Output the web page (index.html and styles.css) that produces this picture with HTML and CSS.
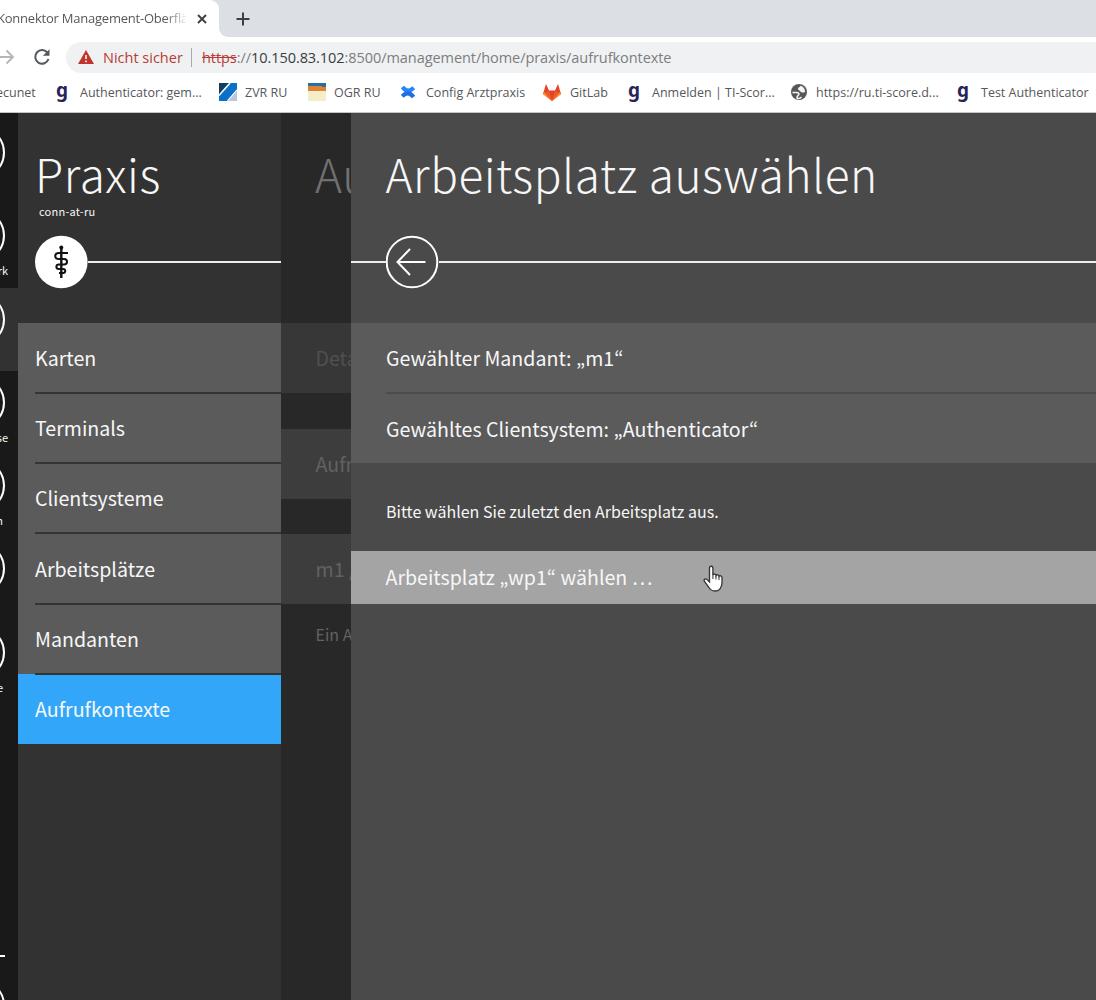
FILE: index.html
```html
<!DOCTYPE html>
<html lang="de">
<head>
<meta charset="utf-8">
<title>Konnektor Management-Oberfläche</title>
<link rel="stylesheet" href="styles.css">
</head>
<body>
<header class="browser">
  <div class="tabstrip">
    <div class="tab"><span class="tab-title">Konnektor Management-Oberfläche</span>
      <svg class="tab-close" width="10" height="10" viewBox="0 0 10 10"><path d="M1 1l8 8M9 1l-8 8" stroke="#3c4043" stroke-width="1.9"/></svg>
    </div>
    <div class="tab-rest"><svg width="14" height="14" viewBox="0 0 14 14"><path d="M7 .5v13M.5 7h13" stroke="#3c4043" stroke-width="2"/></svg></div>
  </div>
  <div class="toolbar">
    <svg class="forward" width="16" height="16" viewBox="0 0 16 16"><path d="M0 8h13M6.500 1.500L13 8l-6.500 6.500" fill="none" stroke="#b4b6b8" stroke-width="1.9"/></svg>
    <svg class="reload" width="18" height="18" viewBox="0 0 18 18"><path d="M14.600 5A6.800 6.800 0 1 0 15.500 11" fill="none" stroke="#55585c" stroke-width="2"/><path d="M16.500 1.200v6.600h-6.600z" fill="#55585c"/></svg>
    <div class="address">
      <svg class="warn" width="16" height="14" viewBox="0 0 16 14"><path d="M8 0l8 14H0z" fill="#c0352b"/><path d="M8 5v4M8 10.500v1.700" stroke="#fff" stroke-width="1.500"/></svg>
      <span class="insecure">Nicht sicher</span>
      <span class="divider"></span>
      <span class="url"><s>https</s>://<b>10.150.83.102</b>:8500/management/home/praxis/aufrufkontexte</span>
    </div>
  </div>
  <nav class="bookmarks">
    <span class="bm bm-secunet">secunet</span>
    <span class="bm bm-auth"><i class="g">g</i><span>Authenticator: gem...</span></span>
    <span class="bm bm-zvr"><svg width="18" height="18" viewBox="0 0 18 18"><path d="M0 0h18v18H0z" fill="#0b70c8"/><path d="M0 0h10L0 11z" fill="#173c5c"/><path d="M11 0L0 12.500" stroke="#fff" stroke-width="1.500"/><path d="M18 8v10H9z" fill="#b8c8dc"/><path d="M18 7L8.500 18" stroke="#fff" stroke-width="1.200"/></svg><span>ZVR RU</span></span>
    <span class="bm bm-ogr"><svg width="18" height="18" viewBox="0 0 18 18"><path d="M0 0h18v18H0z" fill="#f3edc9"/><path d="M0 0h18v8H0z" fill="#df8136"/><path d="M0 0h18v4h-4V3H0z" fill="#286f9f"/></svg><span>OGR RU</span></span>
    <span class="bm bm-config"><svg width="14" height="14" viewBox="0 0 14 14"><path d="M1.500 2C5 7 9 6.500 12.800 2.800" fill="none" stroke="#2684ff" stroke-width="4.200"/><path d="M12.500 12C9 7 5 7.500 1.200 11.200" fill="none" stroke="#1f70e0" stroke-width="4.200"/></svg><span>Config Arztpraxis</span></span>
    <span class="bm bm-gitlab"><svg width="18" height="17" viewBox="0 0 18 17"><path d="M9 17L0 10 3 0l3 6.500h6L15 0l3 10z" fill="#e24329"/><path d="M9 17L2 9l4-2.500zM9 17l7-8-4-2.500z" fill="#ee5a28"/><path d="M9 17L0 10l.8-2.500zM9 17l9-7-.8-2.500z" fill="#fc8a26"/></svg><span>GitLab</span></span>
    <span class="bm bm-anm"><i class="g">g</i><span>Anmelden | TI-Scor...</span></span>
    <span class="bm bm-ru"><svg width="16" height="16" viewBox="0 0 16 16"><circle cx="8" cy="8" r="8" fill="#585858"/><path d="M1.500 8.500h4c2.500 0 3 1.500 2 2.500-.8.800-1.500.8-1.500 3.200 2 .6 3.500 0 4.500-1.200" fill="none" stroke="#f5f5f5" stroke-width="1.500"/><path d="M9.500 1.800C9 3.500 7 3 7 5c0 1.500 1.800 1 2.500 2.500.8 1.500 3 1.200 4.500.5.200-2.500-1.500-5.500-4.500-6.200z" fill="#f5f5f5"/></svg><span>https://ru.ti-score.d...</span></span>
    <span class="bm bm-test"><i class="g">g</i><span>Test Authenticator</span></span>
  </nav>
</header>
<main class="app">
  <nav class="rail">
    <div class="rail-item"><span class="ring"></span></div>
    <div class="rail-item"><span class="ring"></span><span class="rail-label">Netzwerk</span></div>
    <div class="rail-item active"><span class="ring"></span></div>
    <div class="rail-item"><span class="ring"></span><span class="rail-label">Diagnose</span></div>
    <div class="rail-item"><span class="ring"></span><span class="rail-label n">System</span></div>
    <div class="rail-item"><span class="ring"></span></div>
    <div class="rail-item"><span class="ring"></span><span class="rail-label e">Hilfe</span></div>
    <div class="rail-foot"><span class="rail-line"></span><span class="ring"></span></div>
  </nav>
  <section class="panel praxis">
    <div class="head">
      <h1>Praxis</h1>
      <p class="host">conn-at-ru</p>
      <div class="rule">
        <svg width="53" height="54" viewBox="0 0 53 54"><circle cx="26.300" cy="27" r="26.300" fill="#fff"/><path d="M26.300 12v31" stroke="#111" stroke-width="2.400"/><circle cx="26.300" cy="12.500" r="2" fill="#111"/><path d="M33 18H24c-5 0-5 6 0 6h5c4 0 4 5.500 0 5.500h-5c-3.500 0-3.500 4.500 0 4.500h4c3 0 3 4 0 4h-4" fill="none" stroke="#111" stroke-width="2"/></svg>
        <span class="line"></span>
      </div>
    </div>
    <ul class="menu">
      <li><span>Karten</span></li>
      <li><span>Terminals</span></li>
      <li><span>Clientsysteme</span></li>
      <li><span>Arbeitsplätze</span></li>
      <li><span>Mandanten</span></li>
      <li class="selected"><span>Aufrufkontexte</span></li>
    </ul>
  </section>
  <section class="panel context">
    <div class="head"><h1>Aufrufkontexte</h1></div>
    <div class="dim first">Details</div>
    <div class="dim second">Aufrufkontext</div>
    <div class="dim third">m1 / Authenticator</div>
    <p class="dim-note">Ein Aufrufkontext</p>
  </section>
  <section class="panel workplace">
    <div class="head">
      <h1>Arbeitsplatz auswählen</h1>
      <div class="rule">
        <span class="line lead"></span>
        <svg width="53" height="54" viewBox="0 0 53 54"><circle cx="26" cy="27" r="25.300" fill="none" stroke="#fff" stroke-width="2"/><path d="M39.500 27H11.500M24 14L11.500 27 24 40" fill="none" stroke="#fff" stroke-width="2"/></svg>
        <span class="line"></span>
      </div>
    </div>
    <div class="facts">
      <div class="fact"><span>Gewählter Mandant: „m1“</span></div>
      <div class="fact"><span>Gewähltes Clientsystem: „Authenticator“</span></div>
    </div>
    <p class="hint">Bitte wählen Sie zuletzt den Arbeitsplatz aus.</p>
    <div class="choice">Arbeitsplatz „wp1“ wählen …
      <svg class="hand" width="22" height="27" viewBox="0 0 22 27"><path d="M6.500 17V3.200c0-2.600 3.400-2.600 3.400 0V10c.6-1.500 3-1.200 3.100.5.700-1.300 2.900-.8 3 .8.900-1 3-.5 3 1.500V18c0 2.500-1 3.500-1.500 5-1 2-2.500 3-5.500 3s-4.500-1-6-3.500L1.500 16.500c-1.200-2.200 1-3.600 2.700-1.900z" fill="#fff" stroke="#333" stroke-width="1.300"/><path d="M9.900 9.500v4.500M13 10.500v4M16 11.500v3.500" stroke="#333" stroke-width="1"/></svg>
    </div>
  </section>
</main>
</body>
</html>
```
FILE: styles.css
```css
* { box-sizing: border-box; }
body { margin: 0; width: 1096px; height: 1000px; overflow: hidden; font-family: "Noto Sans CJK KR", "Noto Sans CJK SC", sans-serif; color: #f7f7f7; }
h1, p, ul { margin: 0; padding: 0; list-style: none; font-weight: 400; }
svg { display: block; flex: none; }

.browser { height: 113px; background: #fff; border-bottom: 1px solid #c4c6c4; font-family: "Open Sans", sans-serif; color: #55585c; white-space: nowrap; }
.tabstrip { display: flex; height: 37px; background: linear-gradient(#fff, #fff) 215px 27px / 20px 10px no-repeat, #dcdfe4; }
.tab { display: flex; align-items: center; width: 219px; background: #fff; border-top-right-radius: 9px; }
.tab-title { width: 189px; margin: -2px 0 0 -3px; overflow: hidden; font-size: 13px; letter-spacing: -.22px; mask-image: linear-gradient(90deg, #000 168px, transparent 192px); }
.tab-close { margin-left: 11px; }
.tab-rest { flex: 1; display: flex; align-items: center; padding-left: 17px; background: #dcdfe4; border-bottom-left-radius: 9px; }
.toolbar { display: flex; align-items: center; height: 40px; }
.reload { margin-left: 17px; }
.address { display: flex; align-items: center; flex: 1; height: 31px; margin-left: 15px; padding-left: 12px; background: #f0f1f2; border-radius: 16px 0 0 16px; font-size: 15px; }
.insecure { width: 80px; margin-left: 9px; color: #b83c35; font-size: 14.500px; }
.divider { width: 1px; height: 19px; margin: 0 10px 0 8px; background: #a8abad; }
.url { color: #7b7e80; font-size: 14.500px; letter-spacing: -.06px; }
.url b { font-weight: 400; color: #393c40; }
.url s { color: #b83c35; }
.bookmarks { display: flex; align-items: center; height: 30px; font-size: 12.500px; }
.bm { display: flex; align-items: center; flex: none; }
.bm-secunet { width: 60px; margin-left: -10px; }
.g { width: 13px; margin-right: 11px; font: 700 19px/18px "Noto Sans", sans-serif; color: #29235b; transform: translateY(-2px); }
.bm-auth { width: 163px; margin-left: 6px; }
.bm-zvr { width: 89px; gap: 8px; }
.bm-ogr { width: 93px; gap: 8px; }
.bm-config { width: 142px; gap: 11px; }
.bm-gitlab { width: 85px; gap: 9px; }
.bm-anm { width: 163px; }
.bm-ru { width: 166px; gap: 9px; }

.app { display: flex; height: 887px; }
.rail { display: flex; flex-direction: column; width: 18px; padding-top: 8px; background: #191919; overflow: hidden; }
.rail-item { height: 83.300px; padding-top: 5px; }
.rail-item.active { background: #323232; }
.ring { display: block; width: 53px; height: 53px; margin-left: -48px; border: 2px solid #fff; border-radius: 50%; }
.rail-label { display: block; width: 70px; margin: -1px 0 0 -62px; text-align: right; font-size: 11px; line-height: 18px; }
.rail-label.n, .rail-label.e { margin-left: -67px; }
.rail-foot { margin-top: auto; height: 46px; }
.rail-line { display: block; width: 5px; height: 2px; margin: 1px 0 22px; background: #fff; }

.panel { height: 887px; overflow: hidden; white-space: nowrap; }
.head { height: 210px; }
h1 { height: 88px; padding-top: 28px; font-size: 46px; line-height: 64px; font-weight: 200; letter-spacing: .54px; }
.praxis { width: 263px; background: #323232; }
.praxis h1 { padding-left: 17px; }
.host { height: 34px; padding-left: 21px; font-size: 11px; line-height: 20px; letter-spacing: .25px; }
.rule { display: flex; align-items: center; }
.praxis .rule { padding-left: 17px; }
.line { flex: 1; height: 2px; background: #eee; }
.line.lead { flex: none; width: 35px; }
.menu li { height: 70.200px; padding-left: 17px; background: #5b5b5b; font-size: 19.600px; }
.menu span { display: block; position: relative; height: 71px; line-height: 70.500px; border-bottom: 2px solid #343434; }
.menu .selected { background: #32a7f9; }
.menu .selected span { border: 0; }

.context { width: 70px; background: #282828; color: #626262; }
.context h1 { padding-left: 34px; color: #707070; }
.dim { height: 70px; padding-left: 34.500px; background: #3d3d3d; font-size: 19.600px; line-height: 70px; overflow: hidden; }
.dim.first { background: #373737; color: #505050; }
.dim.second { margin-top: 36px; }
.dim.third { margin-top: 35px; }
.dim-note { padding: 19px 0 0 34.500px; font-size: 16px; line-height: 22px; }

.workplace { flex: 1; background: #4a4a4a; }
.workplace h1 { height: 122px; padding-left: 34.500px; }
.facts { background: #5b5b5b; padding-left: 35px; height: 140px; }
.fact { height: 70.500px; line-height: 70px; font-size: 19.600px; }
.fact:first-child { border-bottom: 2px solid #4c4c4c; }
.hint { height: 88px; padding: 36px 0 0 35px; font-size: 16px; line-height: 24px; }
.choice { position: relative; height: 53px; padding-left: 34.500px; background: #a4a4a4; font-size: 19.600px; line-height: 52px; }
.hand { position: absolute; left: 352px; top: 14px; }
```
